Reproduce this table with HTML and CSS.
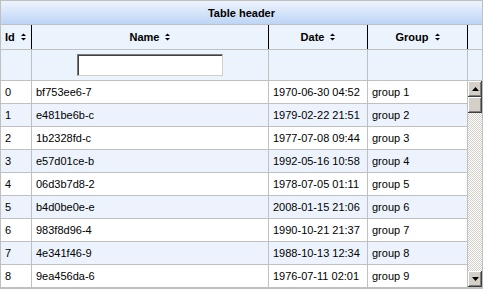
FILE: index.html
```html
<!DOCTYPE html>
<html>
<head>
<meta charset="utf-8">
<link rel="stylesheet" href="styles.css">
</head>
<body>
<div class="grid">
  <div class="title">Table header</div>
  <div class="head">
    <div class="hc hc-id">Id <svg class="sort" width="5" height="8" viewBox="0 0 5 8"><polygon points="0,3 5,3 2.5,0.5"/><polygon points="0,5 5,5 2.5,7.5"/></svg></div>
    <div class="hc hc-center">Name <svg class="sort" width="5" height="8" viewBox="0 0 5 8"><polygon points="0,3 5,3 2.5,0.5"/><polygon points="0,5 5,5 2.5,7.5"/></svg></div>
    <div class="hc hc-center">Date <svg class="sort" width="5" height="8" viewBox="0 0 5 8"><polygon points="0,3 5,3 2.5,0.5"/><polygon points="0,5 5,5 2.5,7.5"/></svg></div>
    <div class="hc hc-center">Group <svg class="sort" width="5" height="8" viewBox="0 0 5 8"><polygon points="0,3 5,3 2.5,0.5"/><polygon points="0,5 5,5 2.5,7.5"/></svg></div>
    <div class="hc hc-last"></div>
  </div>
  <div class="filter">
    <div class="fc"></div>
    <div class="fc fc-center"><input class="finput" type="text"></div>
    <div class="fc"></div>
    <div class="fc"></div>
    <div class="fc fc-last"></div>
  </div>
  <div class="body">
    <div class="rows">
      <div class="row"><div class="c">0</div><div class="c">bf753ee6-7</div><div class="c">1970-06-30 04:52</div><div class="c">group 1</div></div>
      <div class="row alt"><div class="c">1</div><div class="c">e481be6b-c</div><div class="c">1979-02-22 21:51</div><div class="c">group 2</div></div>
      <div class="row"><div class="c">2</div><div class="c">1b2328fd-c</div><div class="c">1977-07-08 09:44</div><div class="c">group 3</div></div>
      <div class="row alt"><div class="c">3</div><div class="c">e57d01ce-b</div><div class="c">1992-05-16 10:58</div><div class="c">group 4</div></div>
      <div class="row"><div class="c">4</div><div class="c">06d3b7d8-2</div><div class="c">1978-07-05 01:11</div><div class="c">group 5</div></div>
      <div class="row alt"><div class="c">5</div><div class="c">b4d0be0e-e</div><div class="c">2008-01-15 21:06</div><div class="c">group 6</div></div>
      <div class="row"><div class="c">6</div><div class="c">983f8d96-4</div><div class="c">1990-10-21 21:37</div><div class="c">group 7</div></div>
      <div class="row alt"><div class="c">7</div><div class="c">4e341f46-9</div><div class="c">1988-10-13 12:34</div><div class="c">group 8</div></div>
      <div class="row"><div class="c">8</div><div class="c">9ea456da-6</div><div class="c">1976-07-11 02:01</div><div class="c">group 9</div></div>
    </div>
    <div class="scroll">
      <div class="sbtn"><svg width="7" height="4" viewBox="0 0 7 4"><polygon points="0,4 7,4 3.5,0"/></svg></div>
      <div class="sthumb"></div>
      <div class="strack"></div>
      <div class="sbtn"><svg width="7" height="4" viewBox="0 0 7 4"><polygon points="0,0 7,0 3.5,4"/></svg></div>
    </div>
  </div>
</div>
</body>
</html>
```
FILE: styles.css
```css
* { box-sizing: border-box; }
body {
  margin: 0;
  background: #fff;
  font: 11px "Liberation Sans", Arial, sans-serif;
  color: #000;
}
.grid {
  width: 483px;
  border: 1px solid #c0c0c0;
}
.title {
  height: 24px;
  border-bottom: 1px solid #c0c0c0;
  background: linear-gradient(#eef4fd, #bdd5f6);
  font-weight: bold;
  display: flex;
  align-items: center;
  justify-content: center;
}
.head, .filter, .row {
  display: grid;
  grid-template-columns: 31px 237px 99px 100px;
}
.head, .filter {
  grid-template-columns: 31px 237px 99px 100px 14px;
}
.head {
  height: 25px;
  border-bottom: 1px solid #c0c0c0;
  background: #ebf3fd;
  font-weight: bold;
}
.hc {
  border-right: 1px solid #000;
  display: flex;
  align-items: center;
}
.hc-id { padding-left: 4px; }
.hc-center { justify-content: center; }
.hc-last { border-right: none; }
.sort { margin-left: 6px; fill: #000; }
.filter {
  height: 31px;
  border-bottom: 1px solid #c0c0c0;
  background: #ebf3fd;
}
.fc { border-right: 1px solid #c0c0c0; }
.fc-last { border-right: none; }
.fc-center {
  display: flex;
  align-items: center;
  justify-content: center;
}
.finput {
  width: 146px;
  height: 22px;
  margin: 0 0 0 -1px;
  padding: 0;
  background: #fff;
  border: 1px solid;
  border-color: #7a7a7a #d4d0c8 #d4d0c8 #7a7a7a;
  box-shadow: inset 1px 1px #404040;
  outline: none;
}
.body { display: flex; }
.rows { width: 467px; }
.row {
  height: 23px;
  border-bottom: 1px solid #c0c0c0;
  background: #fff;
}
.row.alt { background: #ecf3fd; }
.c {
  border-right: 1px solid #c0c0c0;
  padding-left: 4px;
  display: flex;
  align-items: center;
  white-space: nowrap;
}
.scroll {
  width: 14px;
  display: flex;
  flex-direction: column;
  border-bottom: 1px solid #c0c0c0;
}
.sbtn, .sthumb {
  height: 16px;
  background: #d4d0c8;
  box-shadow: inset -1px -1px #404040, inset 1px 1px #fff, inset -2px -2px #808080;
  display: flex;
  align-items: center;
  justify-content: center;
}
.sbtn svg { fill: #000; margin-top: -1px; }
.strack {
  flex: 1;
  background: repeating-conic-gradient(#d4d0c8 0 25%, #fff 0 50%) 0 0 / 2px 2px;
}
```
